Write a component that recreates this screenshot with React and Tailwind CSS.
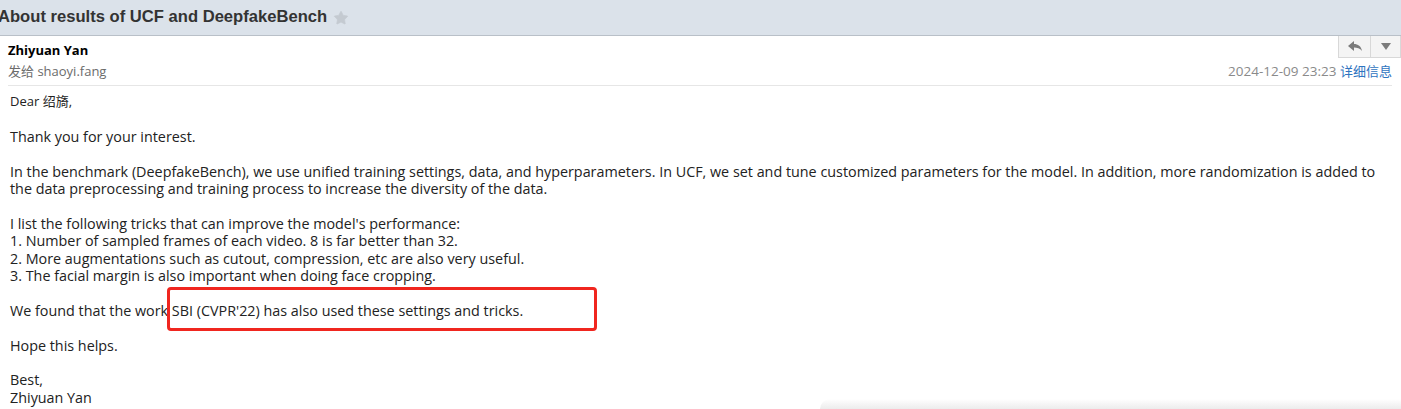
import { Star } from 'lucide-react';

const body = [
  ['Thank you for your interest.'],
  [
    'In the benchmark (DeepfakeBench), we use unified training settings, data, and hyperparameters. In UCF, we set and tune customized parameters for the model. In addition, more randomization is added to',
    'the data preprocessing and training process to increase the diversity of the data.',
  ],
  [
    "I list the following tricks that can improve the model's performance:",
    '1. Number of sampled frames of each video. 8 is far better than 32.',
    '2. More augmentations such as cutout, compression, etc are also very useful.',
    '3. The facial margin is also important when doing face cropping.',
  ],
];

export default function App() {
  return (
    <div className="relative w-[1401px] h-[409px] overflow-hidden bg-white text-[#222] font-['Open_Sans','Noto_Sans_CJK_SC',sans-serif]">
      {/* subject bar */}
      <div className="h-[36px] bg-[#dbe2ea] border-b border-[#b9c0c8] flex items-center">
        <h1 className="-ml-[2px] text-[16.6px] font-bold text-[#333] font-['Liberation_Sans','Noto_Sans_CJK_SC',sans-serif]">About results of UCF and DeepfakeBench</h1>
        <Star className="ml-[6px] w-[16px] h-[16px] text-[#c4cad1]" fill="currentColor" strokeWidth={1} />
      </div>

      {/* sender */}
      <div className="relative px-[8px]">
        <div className="absolute right-0 top-0 flex h-[22px] border border-t-0 border-[#d8d8d8] bg-[#f4f4f4]">
          <div className="w-[32px] flex items-center justify-center border-r border-[#d8d8d8]">
            <svg width="14" height="11" viewBox="0 0 14 11">
              <path d="M0 5 L6 0 V3 C10 3 13 5 14 10 C12 7 9 6.5 6 6.5 V10 Z" fill="#7c7c7c" />
            </svg>
          </div>
          <div className="w-[29px] flex items-center justify-center">
            <svg width="10" height="7" viewBox="0 0 10 7">
              <path d="M0 0 H10 L5 7 Z" fill="#7c7c7c" />
            </svg>
          </div>
        </div>
        <div className="pt-[5px] text-[13px] font-bold text-black leading-[18px]">Zhiyuan Yan</div>
        <div className="flex justify-between items-center pt-[3px] pb-[5px] text-[13px] leading-[18px] border-b border-[#e6e6e6] mr-[1px]">
          <span className="text-[#6b6b6b]">发给 shaoyi.fang</span>
          <span className="text-[#8a8a8a] text-[13.5px]">
            2024-12-09 23:23 <span className="text-[#2f74c0] text-[13px]">详细信息</span>
          </span>
        </div>
      </div>

      {/* message body */}
      <div className="px-[10px] pt-[7px] text-[14.35px] leading-[17.4px]">
        <p className="text-[13px] mb-[17.4px]">Dear 绍旖,</p>
        {body.map((para, i) => (
          <p key={i} className="mb-[17.4px]">
            {para.map((line, j) => (
              <span key={j} className="block">{line}</span>
            ))}
          </p>
        ))}
        <p className="mb-[17.4px]">
          We found that the work{' '}
          <span className="relative">
            <span className="absolute -left-[5px] -top-[14px] w-[430px] h-[44px] border-[3px] border-[#f0261f] rounded-[4px]" />
            SBI (CVPR'22) has also used these settings and tricks.
          </span>
        </p>
        <p className="mb-[17.4px]">Hope this helps.</p>
        <p>
          <span className="block">Best,</span>
          <span className="block">Zhiyuan Yan</span>
        </p>
      </div>

      {/* faint shadow of the pane below */}
      <div className="absolute left-[820px] right-0 bottom-0 h-[10px] bg-gradient-to-b from-white to-[#ececec] rounded-tl-[10px]" />
    </div>
  );
}
